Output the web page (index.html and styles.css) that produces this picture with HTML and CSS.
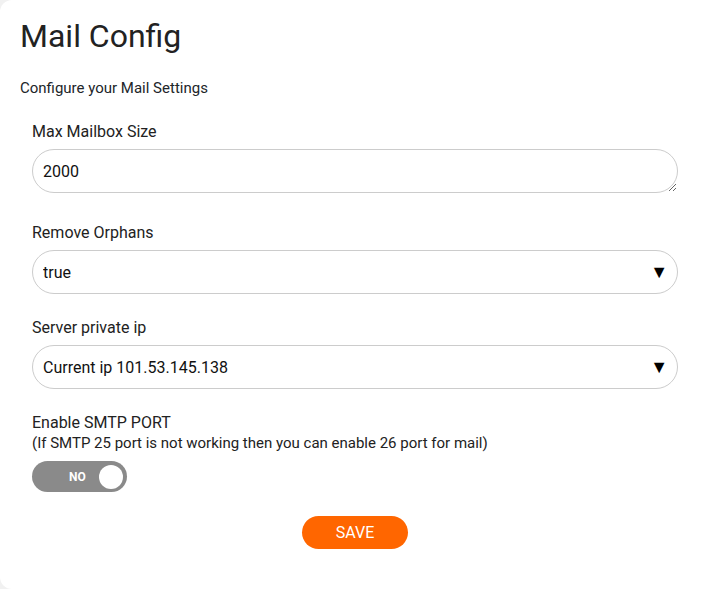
FILE: index.html
```html
<!DOCTYPE html>
<html lang="en">
  <head>
    <meta charset="UTF-8" />
    <meta name="viewport" content="width=device-width, initial-scale=1.0" />
    <title>Mail Config</title>
    <link rel="stylesheet" href="styles.css">
  </head>
  <body>
    <div class="card">
      <h1>Mail Config</h1>
      <p class="subtitle">Configure your Mail Settings</p>
      <form class="form">
        <div class="group group-text">
          <label>Max Mailbox Size</label>
          <textarea class="field" rows="1">2000</textarea>
        </div>
        <div class="group">
          <label>Remove Orphans</label>
          <div class="select-wrap">
            <select class="field">
              <option>true</option>
              <option>false</option>
            </select>
          </div>
        </div>
        <div class="group">
          <label>Server private ip</label>
          <div class="select-wrap">
            <select class="field">
              <option>Current ip 101.53.145.138</option>
            </select>
          </div>
        </div>
        <div class="group group-toggle">
          <label>Enable SMTP PORT<span class="hint">(If SMTP 25 port is not working then you can enable 26 port for mail)</span></label>
          <div class="toggle">
            <span class="toggle-text">NO</span>
            <span class="knob"></span>
          </div>
        </div>
        <div class="actions">
          <button type="button" class="save">SAVE</button>
        </div>
      </form>
    </div>
  </body>
</html>
```

FILE: styles.css
```css
* {
  box-sizing: border-box;
}
body {
  margin: 0;
  background: #f1f1f1;
  font-family: Roboto, "Liberation Sans", sans-serif;
  color: #212529;
}
.card {
  background: #fff;
  border-radius: 12px 0 0 12px;
  min-height: 589px;
  padding: 18px 26px 0 20px;
}
h1 {
  margin: 0;
  font-size: 32px;
  font-weight: 400;
  line-height: 37px;
  color: #222;
}
.subtitle {
  margin: 23px 0 0;
  font-size: 15px;
  line-height: 20px;
}
.form {
  padding-left: 12px;
  margin-top: 24px;
}
.group {
  margin-bottom: 24px;
}
.group-text {
  margin-bottom: 30px;
}
.group label {
  display: block;
  font-size: 16px;
  line-height: 20px;
  margin-bottom: 7px;
  color: #222;
}
.hint {
  display: block;
  font-size: 15px;
  line-height: 20px;
}
.field {
  display: block;
  width: 100%;
  height: 44px;
  border: 1px solid #ccc;
  border-radius: 22px;
  background: #fff;
  font-family: Roboto, "Liberation Sans", sans-serif;
  font-size: 16px;
  color: #111;
  padding: 0 10px;
  outline: none;
}
textarea.field {
  padding: 12px 10px 10px;
  line-height: 20px;
  resize: vertical;
}
select.field {
  -webkit-appearance: none;
  appearance: none;
}
.select-wrap {
  position: relative;
}
.select-wrap::after {
  content: "\25BC";
  position: absolute;
  right: 10px;
  top: 11px;
  font-size: 18px;
  color: #000;
  pointer-events: none;
}
.group-toggle {
  margin-bottom: 24px;
}
.group-toggle label {
  margin-bottom: 8px;
}
.toggle {
  width: 95px;
  height: 31px;
  border-radius: 16px;
  background: #8a8a8a;
  display: flex;
  align-items: center;
  padding: 0 4px 0 37px;
}
.toggle-text {
  color: #fff;
  font-size: 12px;
  font-weight: 700;
  flex: 1;
}
.knob {
  width: 24px;
  height: 24px;
  border-radius: 50%;
  background: #fff;
}
.actions {
  display: flex;
  justify-content: center;
}
.save {
  background: #ff6600;
  color: #fff;
  border: 0;
  border-radius: 17px;
  width: 106px;
  height: 33px;
  font-family: Roboto, "Liberation Sans", sans-serif;
  font-size: 16px;
}
```
